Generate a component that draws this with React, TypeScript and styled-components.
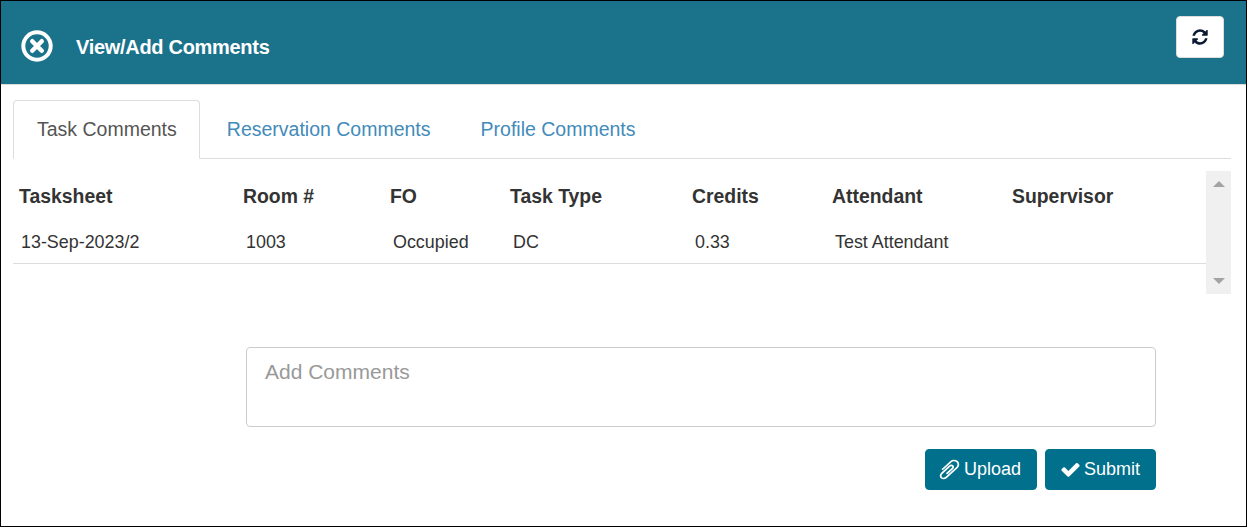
import React from 'react';
import styled, { createGlobalStyle } from 'styled-components';

const GlobalStyle = createGlobalStyle`
  html, body {
    margin: 0;
    padding: 0;
    background: #fff;
  }
  body {
    font-family: "Liberation Sans", Arial, sans-serif;
  }
  * {
    box-sizing: border-box;
  }
`;

const Frame = styled.div`
  width: 1247px;
  height: 527px;
  border: 1px solid #000;
  background: #fff;
  overflow: hidden;
`;

const Header = styled.div`
  display: flex;
  align-items: center;
  height: 84px;
  padding: 6px 22px 0 20px;
  background: #1b728b;
  border-bottom: 1px solid #ddd;
`;

const CloseIcon = styled.svg`
  width: 32px;
  height: 32px;
  margin-right: 23px;
  flex: none;
`;

const Title = styled.div`
  flex: 1;
  margin-top: 4px;
  font-size: 20px;
  font-weight: bold;
  letter-spacing: -0.3px;
  color: #fff;
`;

const RefreshButton = styled.button`
  display: flex;
  align-items: center;
  justify-content: center;
  align-self: flex-start;
  width: 48px;
  height: 42px;
  padding: 0;
  margin-top: 9px;
  background: #fff;
  border: 1px solid #ddd;
  border-radius: 4px;
`;

const Body = styled.div`
  padding: 15px 15px 0 12px;
`;

const Tabs = styled.div`
  display: flex;
  height: 59px;
  border-bottom: 1px solid #ddd;
`;

const Tab = styled.div<{ $active?: boolean }>`
  height: 59px;
  padding: 0 22.5px 0 23px;
  margin-right: 2.5px;
  line-height: 57px;
  font-size: 19.5px;
  color: ${(p) => (p.$active ? '#555' : '#428bba')};
  background: ${(p) => (p.$active ? '#fff' : 'transparent')};
  border: 1px solid ${(p) => (p.$active ? '#ddd' : 'transparent')};
  border-bottom-color: ${(p) => (p.$active ? '#fff' : 'transparent')};
  border-radius: 4px 4px 0 0;
`;

const TableArea = styled.div`
  display: flex;
  height: 123px;
  margin-top: 12px;
`;

const TableBody = styled.div`
  flex: 1;
`;

const Row = styled.div<{ $head?: boolean }>`
  display: grid;
  grid-template-columns: 224px 147px 120px 182px 140px 180px 1fr;
  align-items: center;
  height: ${(p) => (p.$head ? '50px' : '43px')};
  ${(p) => (p.$head ? '' : 'border-bottom: 1px solid #ddd;')}
`;

const HeadCell = styled.div`
  padding: 0 0 0 6px;
  font-size: 19.4px;
  font-weight: bold;
  color: #333;
`;

const Cell = styled.div`
  padding: 1px 0 0 8px;
  font-size: 17.9px;
  color: #333;

  &:not(:first-child) {
    padding-left: 9px;
  }
`;

const Scrollbar = styled.div`
  display: flex;
  flex-direction: column;
  align-items: center;
  justify-content: space-between;
  width: 25px;
  height: 123px;
  padding: 10px 0;
  background: #f0f0f0;
`;

const Arrow = styled.div<{ $down?: boolean }>`
  width: 0;
  height: 0;
  border-left: 6px solid transparent;
  border-right: 6px solid transparent;
  ${(p) =>
    p.$down ? 'border-top: 6px solid #a3a3a3;' : 'border-bottom: 6px solid #a3a3a3;'}
`;

const CommentForm = styled.div`
  width: 910px;
  margin: 53px 0 0 233px;
`;

const CommentInput = styled.div`
  height: 80px;
  padding: 12px 18px;
  font-size: 21px;
  line-height: 24px;
  color: #999;
  background: #fff;
  border: 1px solid #ccc;
  border-radius: 4px;
`;

const Actions = styled.div`
  display: flex;
  justify-content: flex-end;
  gap: 8px;
  margin-top: 22px;
`;

const ActionButton = styled.button`
  display: flex;
  align-items: center;
  justify-content: center;
  gap: 2px;
  height: 41px;
  padding: 0 15px;
  font-family: inherit;
  font-size: 18px;
  color: #fff;
  background: #00708c;
  border: 1px solid #00708c;
  border-radius: 4px;
`;

const Icon = styled.svg`
  width: 21px;
  height: 21px;
  fill: currentColor;
  flex: none;
`;

const CheckIcon = styled(Icon)`
  margin: 0 1px 0 -1px;
`;

const ClipIcon = styled(Icon)`
  width: 25px;
  height: 23px;
  margin-left: -4px;
  transform: scaleX(-1);
`;

const RefreshIcon = styled(Icon)`
  width: 18px;
  height: 18px;
  color: #0b1a33;
`;

const columns = ['Tasksheet', 'Room #', 'FO', 'Task Type', 'Credits', 'Attendant', 'Supervisor'];
const values = ['13-Sep-2023/2', '1003', 'Occupied', 'DC', '0.33', 'Test Attendant', ''];

export default function App() {
  return (
    <Frame>
      <GlobalStyle />
      <Header>
        <CloseIcon viewBox="0 0 32 32" fill="none" stroke="#fff">
          <circle cx="16" cy="16" r="13.7" strokeWidth="4" />
          <path d="M11.25 11.25 20.75 20.75M20.75 11.25 11.25 20.75" strokeWidth="4.5" strokeLinecap="round" />
        </CloseIcon>
        <Title>View/Add Comments</Title>
        <RefreshButton>
          <RefreshIcon viewBox="0 0 1792 1792">
            <path d="M1639 1056q0 5-1 7-64 268-268 434.5t-478 166.5q-146 0-282.5-55t-243.5-157l-129 129q-19 19-45 19t-45-19-19-45v-448q0-26 19-45t45-19h448q26 0 45 19t19 45-19 45l-137 137q71 66 161 102t187 36q134 0 250-65t186-179q11-17 53-117 8-23 30-23h192q13 0 22.5 9.5t9.5 22.5zm25-800v448q0 26-19 45t-45 19h-448q-26 0-45-19t-19-45 19-45l138-138q-148-137-349-137-134 0-250 65t-186 179q-11 17-53 117-8 23-30 23h-199q-13 0-22.5-9.5t-9.5-22.5v-7q65-268 270-434.5t480-166.5q146 0 284 55.5t245 156.5l130-129q19-19 45-19t45 19 19 45z" />
          </RefreshIcon>
        </RefreshButton>
      </Header>
      <Body>
        <Tabs>
          <Tab $active>Task Comments</Tab>
          <Tab>Reservation Comments</Tab>
          <Tab>Profile Comments</Tab>
        </Tabs>
        <TableArea>
          <TableBody>
            <Row $head>
              {columns.map((c) => (
                <HeadCell key={c}>{c}</HeadCell>
              ))}
            </Row>
            <Row>
              {values.map((v, i) => (
                <Cell key={i}>{v}</Cell>
              ))}
            </Row>
          </TableBody>
          <Scrollbar>
            <Arrow />
            <Arrow $down />
          </Scrollbar>
        </TableArea>
        <CommentForm>
          <CommentInput>Add Comments</CommentInput>
          <Actions>
            <ActionButton>
              <ClipIcon viewBox="0 0 1792 1792" preserveAspectRatio="none">
                <path d="M1596 1385q0 117-79 196t-196 79q-135 0-235-100l-777-776q-113-115-113-271 0-159 110-270t269-111q158 0 273 113l605 606q10 10 10 22 0 16-30.5 46.5t-46.5 30.5q-13 0-23-10l-606-607q-79-77-181-77-106 0-179 75t-73 181q0 105 76 181l776 777q63 63 145 63 64 0 106-42t42-106q0-82-63-145l-581-581q-26-24-60-24-29 0-48 19t-19 48q0 32 25 59l410 410q10 10 10 22 0 16-31 47t-47 31q-12 0-22-10l-410-410q-63-61-63-149 0-82 57-139t139-57q88 0 149 63l581 581q100 98 100 235z" />
              </ClipIcon>
              Upload
            </ActionButton>
            <ActionButton>
              <CheckIcon viewBox="0 0 1792 1792">
                <path d="M1671 566q0 40-28 68l-724 724-136 136q-28 28-68 28t-68-28l-136-136-362-362q-28-28-28-68t28-68l136-136q28-28 68-28t68 28l294 295 656-657q28-28 68-28t68 28l136 136q28 28 28 68z" />
              </CheckIcon>
              Submit
            </ActionButton>
          </Actions>
        </CommentForm>
      </Body>
    </Frame>
  );
}
